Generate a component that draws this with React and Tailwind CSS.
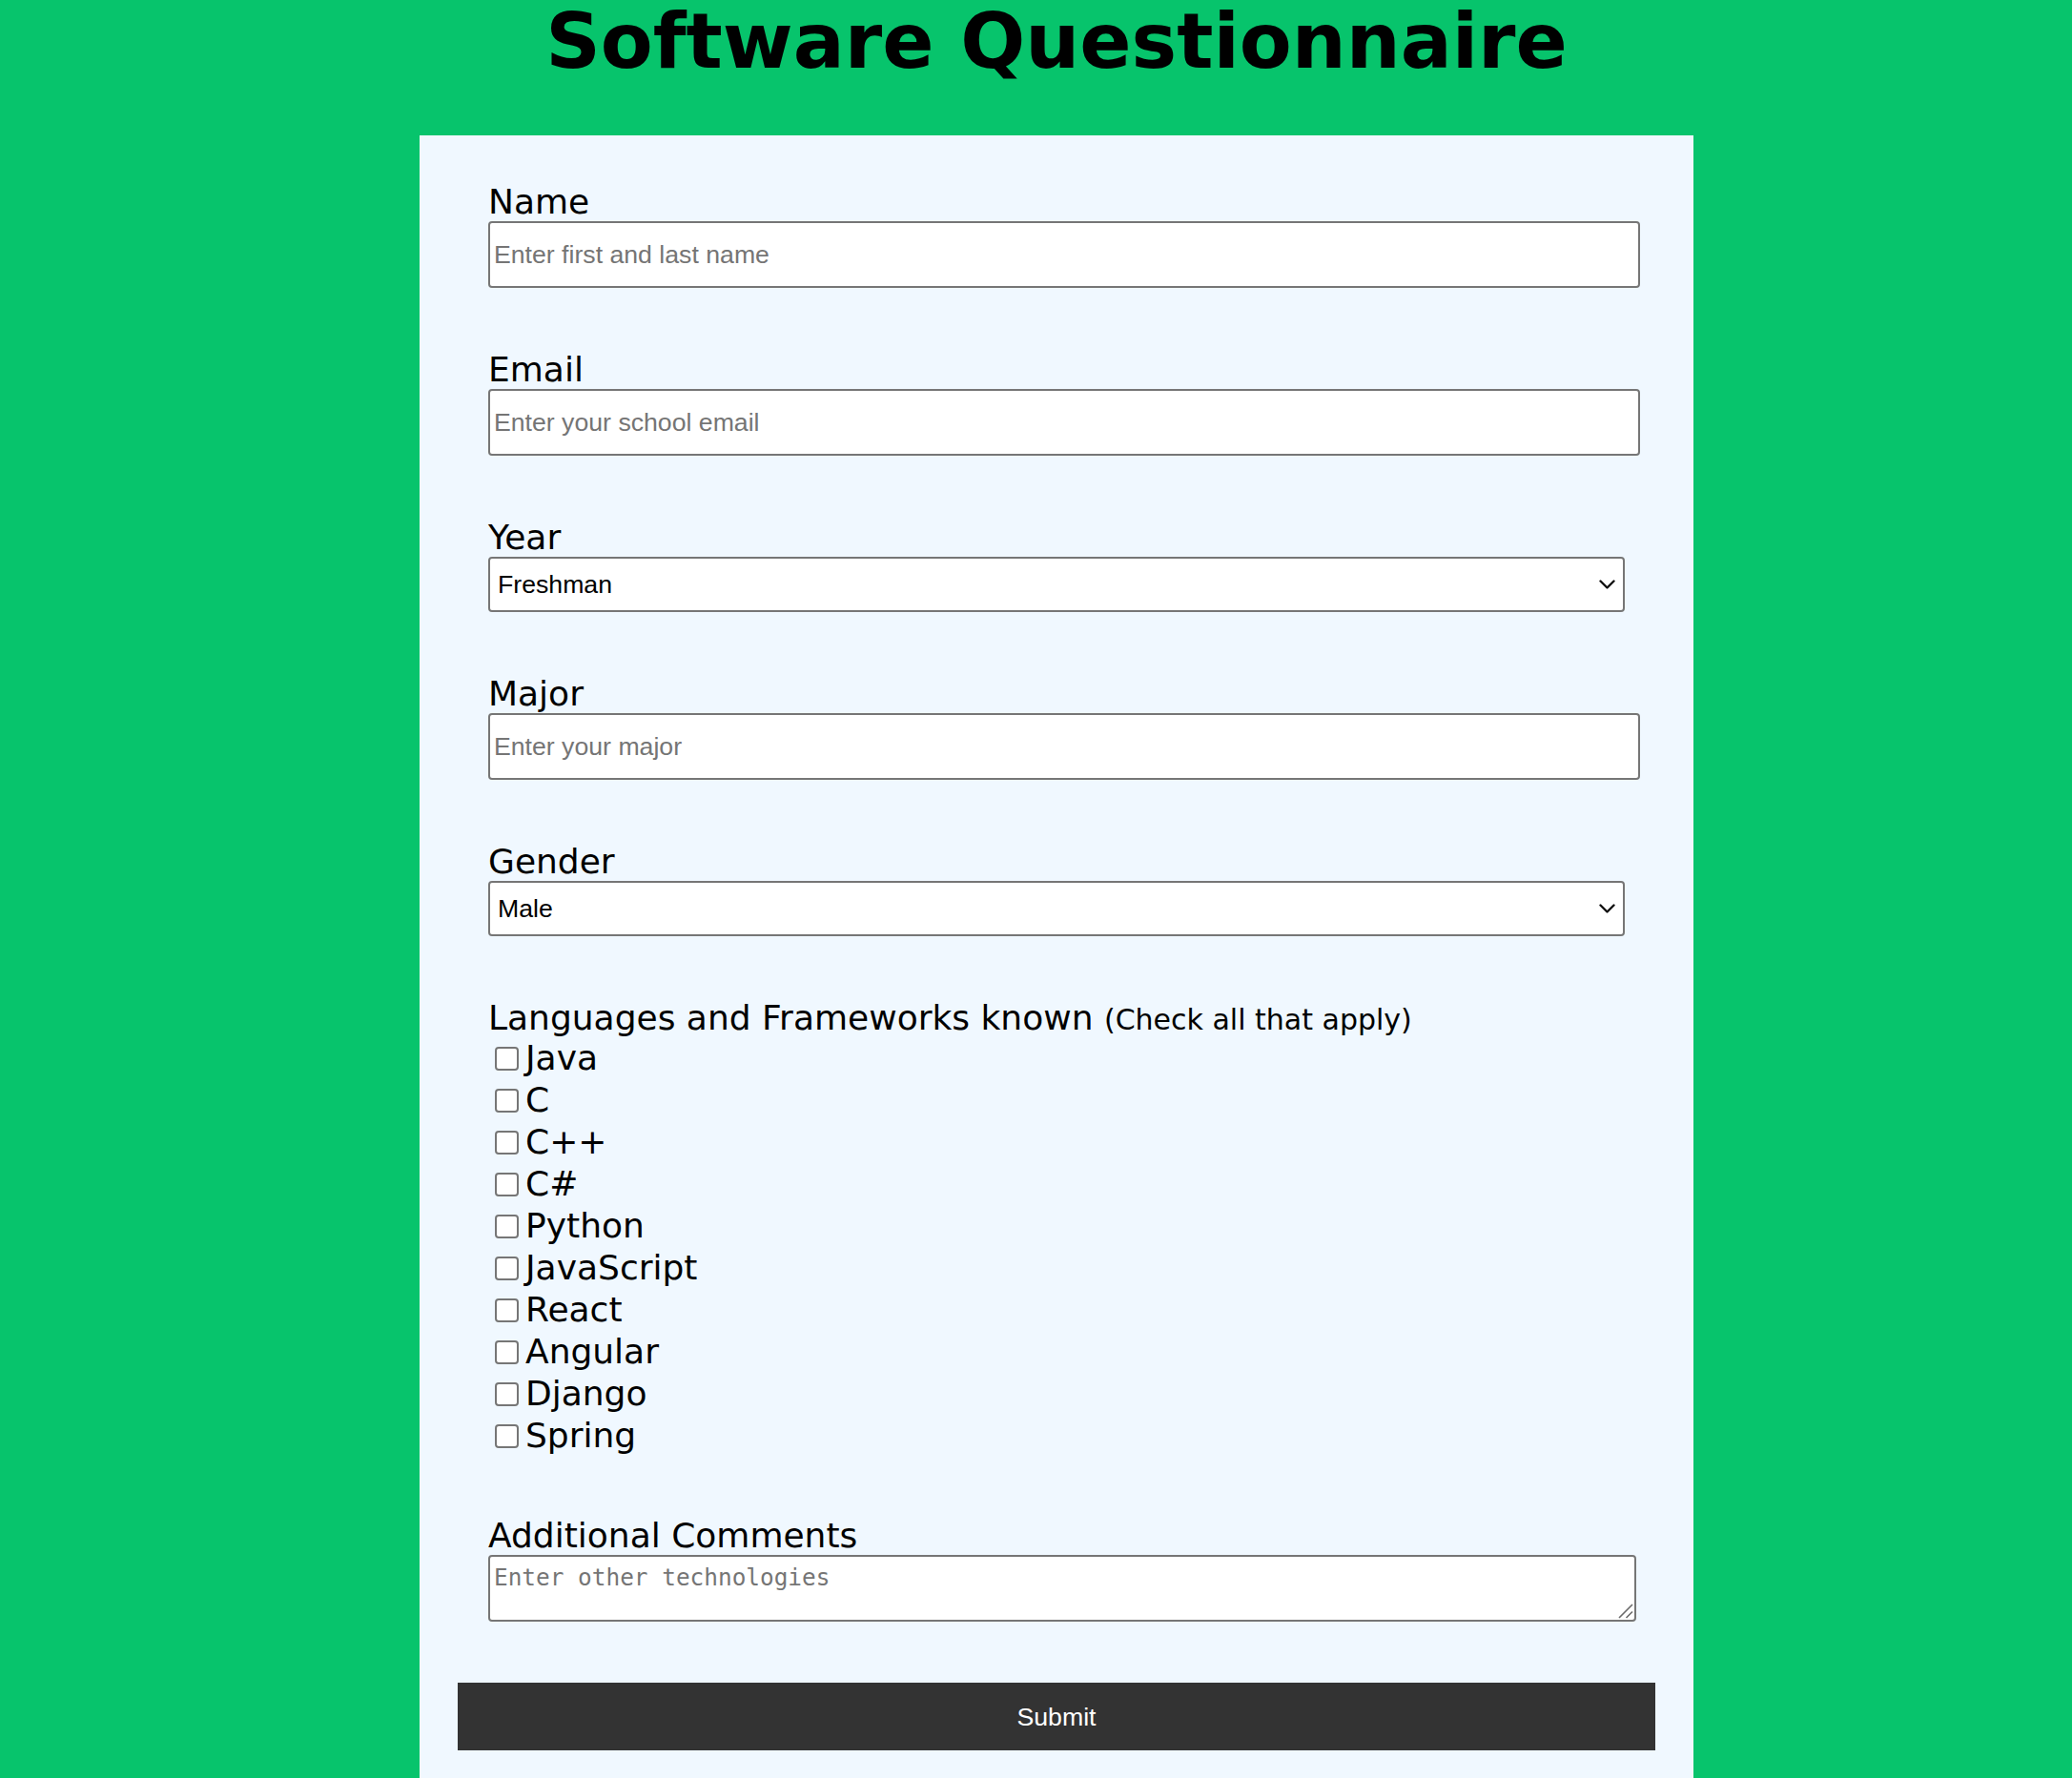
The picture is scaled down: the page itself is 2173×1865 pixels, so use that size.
import React from 'react';

const languages = ['Java', 'C', 'C++', 'C#', 'Python', 'JavaScript', 'React', 'Angular', 'Django', 'Spring'];

const labelCls = "block text-[36px] leading-[normal] text-black font-['DejaVu_Sans',Verdana,sans-serif]";
const inputCls = "block w-[1208px] h-[70px] border-2 border-[#767676] rounded-[4px] bg-white px-[4px] text-[26.67px] text-black font-['Liberation_Sans',Arial,sans-serif] placeholder:text-[#757575] outline-none";

const Field = ({ label, gap = 'mt-[65px]', children }) => (
    <div className={gap}>
        <label className={labelCls}>{label}</label>
        {children}
    </div>
);

const Select = ({ options }) => (
    <div className="relative w-[1192px]">
        <select className="block w-[1192px] h-[58px] appearance-none border-2 border-[#767676] rounded-[4px] bg-white pl-[8px] text-[26.67px] text-black font-['Liberation_Sans',Arial,sans-serif] outline-none">
            {options.map((o) => (
                <option key={o}>{o}</option>
            ))}
        </select>
        {/* chevron */}
        <svg className="absolute right-[10px] top-1/2 -translate-y-1/2 pointer-events-none" width="17" height="10" viewBox="0 0 17 10">
            <path d="M1.5 1.5 L8.5 8.5 L15.5 1.5" fill="none" stroke="#111" strokeWidth="2.4" strokeLinecap="round" strokeLinejoin="round" />
        </svg>
    </div>
);

const App = () => {
    return (
        <div className="h-[1865px] overflow-hidden bg-[#07c46c]">
            <div className="ml-[440px] w-[1336px]">
                <h1 className="m-0 text-center text-[80px] leading-[87px] font-bold text-black font-['DejaVu_Sans',Verdana,sans-serif]">
                    Software Questionnaire
                </h1>

                <form className="mt-[55px] bg-[#f0f8ff] px-[72px] pt-[49px] pb-[48px]" onSubmit={(e) => e.preventDefault()}>
                    <Field label="Name" gap="">
                        <input type="text" placeholder="Enter first and last name" className={inputCls} />
                    </Field>

                    <Field label="Email">
                        <input type="email" placeholder="Enter your school email" className={inputCls} />
                    </Field>

                    <Field label="Year">
                        <Select options={['Freshman', 'Sophomore', 'Junior', 'Senior']} />
                    </Field>

                    <Field label="Major">
                        <input type="text" placeholder="Enter your major" className={inputCls} />
                    </Field>

                    <Field label="Gender">
                        <Select options={['Male', 'Female', 'Other']} />
                    </Field>

                    {/* checkbox list */}
                    <div className="mt-[65px] font-['DejaVu_Sans',Verdana,sans-serif] text-black">
                        <label className="block text-[36px] leading-[normal]">
                            Languages and Frameworks known <span className="text-[30px]">(Check all that apply)</span>
                        </label>
                        {languages.map((lang) => (
                            <div key={lang} className="flex items-center h-[44px] text-[36px] leading-[44px]">
                                <input
                                    type="checkbox"
                                    className="appearance-none shrink-0 w-[25px] h-[25px] ml-[7px] mr-[7px] border-2 border-[#767676] rounded-[4px] bg-white"
                                />
                                <span>{lang}</span>
                            </div>
                        ))}
                    </div>

                    <Field label="Additional Comments" gap="mt-[62px]">
                        <div className="relative w-[1204px]">
                            <textarea
                                placeholder="Enter other technologies"
                                className="block w-[1204px] h-[70px] resize-none border-2 border-[#767676] rounded-[4px] bg-white px-[4px] pt-[7px] pb-[4px] text-[24.4px] leading-[normal] text-black font-['DejaVu_Sans_Mono',monospace] placeholder:text-[#757575] outline-none"
                            />
                            {/* resize grip */}
                            <svg className="absolute right-[3px] bottom-[3px] pointer-events-none" width="17" height="17" viewBox="0 0 17 17">
                                <path d="M2 16 L16 2 M9.5 16 L16 9.5" stroke="#6b6b6b" strokeWidth="1.6" />
                            </svg>
                        </div>
                    </Field>

                    <button
                        type="submit"
                        className="block mt-[64px] -mx-[32px] w-[1256px] h-[71px] bg-[#333333] text-white text-[26.67px] font-['Liberation_Sans',Arial,sans-serif]"
                    >
                        Submit
                    </button>
                </form>
            </div>
        </div>
    );
};

export default App;
